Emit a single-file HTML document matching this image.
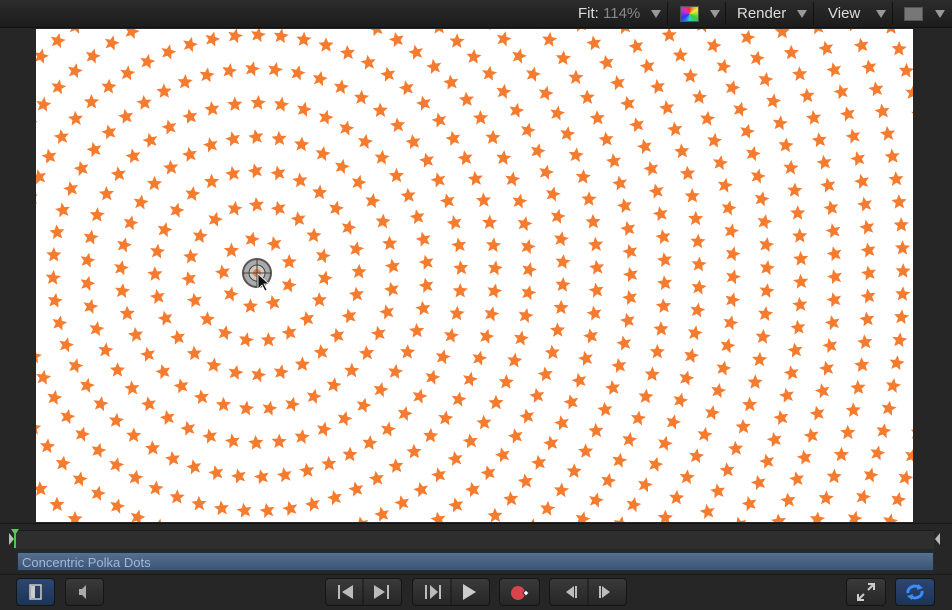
<!DOCTYPE html><html><head><style>
body{margin:0;width:952px;height:610px;background:#262626;overflow:hidden;font-family:"Liberation Sans",sans-serif;position:relative}
.top{position:absolute;left:0;top:0;width:952px;height:27px;background:linear-gradient(#2c2c2c,#1c1c1c);border-bottom:1px solid #111}
.t{position:absolute;top:5px;color:#ddd;font-size:15px}
.tri{position:absolute;top:10px;width:0;height:0;border-left:5px solid transparent;border-right:5px solid transparent;border-top:8px solid #999}
.sep{position:absolute;top:2px;width:1px;height:23px;background:#111}
#cv{position:absolute;left:36px;top:29px;width:877px;height:493px;background:#fff}
.btn{position:absolute;top:578px;height:26px;background:linear-gradient(#3a3a3a,#262626);border:1px solid #151515;border-radius:4px}
.btn svg{position:absolute}
</style></head><body>
<div class="top">
<span class="t" style="left:578px">Fit: <span style="color:#888">114%</span></span><div class="tri" style="left:651px"></div>
<div class="sep" style="left:667px"></div>
<div style="position:absolute;left:680px;top:6px;width:17px;height:14px;background:conic-gradient(#e33,#ee3,#3c3,#3cc,#33e,#c3c,#e33);border:1px solid #555"></div><div class="tri" style="left:710px"></div>
<div class="sep" style="left:725px"></div>
<span class="t" style="left:737px">Render</span><div class="tri" style="left:797px"></div>
<div class="sep" style="left:813px"></div>
<span class="t" style="left:828px">View</span><div class="tri" style="left:876px"></div>
<div class="sep" style="left:892px"></div>
<div style="position:absolute;left:904px;top:7px;width:17px;height:12px;background:#777;border:1px solid #555"></div><div class="tri" style="left:935px"></div>
</div>
<svg id="cv" width="877" height="493" viewBox="0 0 877 493"></svg>
<div style="position:absolute;left:0;top:523px;width:952px;height:1px;background:#151515"></div>
<div style="position:absolute;left:14px;top:530px;width:920px;height:18px;background:#2e2e2e;border-top:1px solid #1a1a1a"></div>
<div style="position:absolute;left:14px;top:530px;width:2px;height:18px;background:#4c4"></div>
<div style="position:absolute;left:11px;top:529px;width:0;height:0;border-left:4px solid transparent;border-right:4px solid transparent;border-top:6px solid #5c5"></div>
<div style="position:absolute;left:935px;top:533px;width:0;height:0;border-top:6px solid transparent;border-bottom:6px solid transparent;border-right:5px solid #bbb"></div>
<div style="position:absolute;left:9px;top:533px;width:0;height:0;border-top:6px solid transparent;border-bottom:6px solid transparent;border-left:5px solid #bbb"></div>
<div style="position:absolute;left:17px;top:552px;width:917px;height:19px;background:linear-gradient(#56708f,#3b5474);border:1px solid #1f2c3c;color:#9fb8d8;font-size:13px;line-height:19px;padding-left:4px;box-sizing:border-box">Concentric Polka Dots</div>
<div style="position:absolute;left:0;top:574px;width:952px;height:1px;background:#1a1a1a"></div>
<div class="btn" style="left:16px;width:37px;background:linear-gradient(#2e4770,#1d3357)"><svg width="37" height="26"><rect x="13" y="6" width="11" height="14" fill="none" stroke="#ccc" stroke-width="1.5"/><rect x="14" y="7" width="4" height="12" fill="#ccc"/></svg></div>
<div class="btn" style="left:65px;width:37px"><svg width="37" height="26"><path d="M13 10h3l4-4v14l-4-4h-3z" fill="#aaa"/></svg></div>
<div class="btn" style="left:325px;width:75px"><svg width="75" height="26"><rect x="12" y="6" width="2" height="14" fill="#bbb"/><path d="M27 6v14l-11-7z" fill="#bbb"/><line x1="37" y1="0" x2="37" y2="26" stroke="#151515"/><path d="M48 6v14l11-7z" fill="#bbb"/><rect x="61" y="6" width="2" height="14" fill="#bbb"/></svg></div>
<div class="btn" style="left:412px;width:76px"><svg width="76" height="26"><rect x="12" y="6" width="2" height="14" fill="#bbb"/><path d="M17 6v14l8-7z" fill="#bbb"/><rect x="26" y="6" width="2" height="14" fill="#bbb"/><line x1="38" y1="0" x2="38" y2="26" stroke="#151515"/><path d="M50 5v16l13-8z" fill="#ccc"/></svg></div>
<div class="btn" style="left:499px;width:39px"><svg width="39" height="26"><circle cx="18" cy="14" r="7" fill="#d9434b"/><path d="M26 11l3 3-3 3-3-3z" fill="#fff" stroke="#333"/></svg></div>
<div class="btn" style="left:549px;width:76px"><svg width="76" height="26"><path d="M24 7v12l-8-6z" fill="#bbb"/><rect x="25" y="7" width="2" height="12" fill="#bbb"/><line x1="38" y1="0" x2="38" y2="26" stroke="#151515"/><rect x="49" y="7" width="2" height="12" fill="#bbb"/><path d="M52 7v12l8-6z" fill="#bbb"/></svg></div>
<div class="btn" style="left:846px;width:38px"><svg width="38" height="26"><path d="M21 5h6v6M27 5l-6 6M17 21h-6v-6M11 21l6-6" fill="none" stroke="#ccc" stroke-width="2"/></svg></div>
<div class="btn" style="left:895px;width:38px;background:linear-gradient(#2e4770,#1d3357)"><svg width="38" height="26"><path d="M12 14a7 6 0 0 1 12-5M26 12a7 6 0 0 1-12 5" fill="none" stroke="#3a8cff" stroke-width="3"/><path d="M22 5l5 4-6 2z M16 21l-5-4 6-2z" fill="#3a8cff"/></svg></div>
<script>
var s=document.getElementById('cv'),cx=221,cy=244,h='';
function star(x,y,r,a){var p=[];for(var i=0;i<10;i++){var rr=i%2?r*0.45:r,t=a+i*Math.PI/5;p.push((x+rr*Math.sin(t)).toFixed(1)+','+(y-rr*Math.cos(t)).toFixed(1));}return '<polygon points="'+p.join(' ')+'"/>';}
for(var k=1;k<22;k++){var R=k*34,n=Math.max(6,Math.round(2*Math.PI*R/23));for(var j=0;j<n;j++){var a=j*2*Math.PI/n+k*0.37,x=cx+R*Math.cos(a),y=cy+R*Math.sin(a);if(x<-9||x>886||y<-9||y>502)continue;h+=star(x,y,8,0.25*Math.sin(a*3+k));}}
s.innerHTML='<g fill="#f57b2f">'+h+'</g><circle cx="'+cx+'" cy="'+cy+'" r="14" fill="#aaa" stroke="#555" stroke-width="2"/><circle cx="'+cx+'" cy="'+cy+'" r="8" fill="#ccc" stroke="#444"/><circle cx="'+cx+'" cy="'+cy+'" r="4" fill="#f57b2f"/><path d="M'+(cx-14)+' '+cy+'h28M'+cx+' '+(cy-14)+'v28" stroke="#444"/><path d="M'+(cx+1)+' '+(cy+1)+'l0 15 4-4 3 6 2-1-3-6 5 0z" fill="#111" stroke="#fff" stroke-width="0.8"/>';
</script>
</body></html>
